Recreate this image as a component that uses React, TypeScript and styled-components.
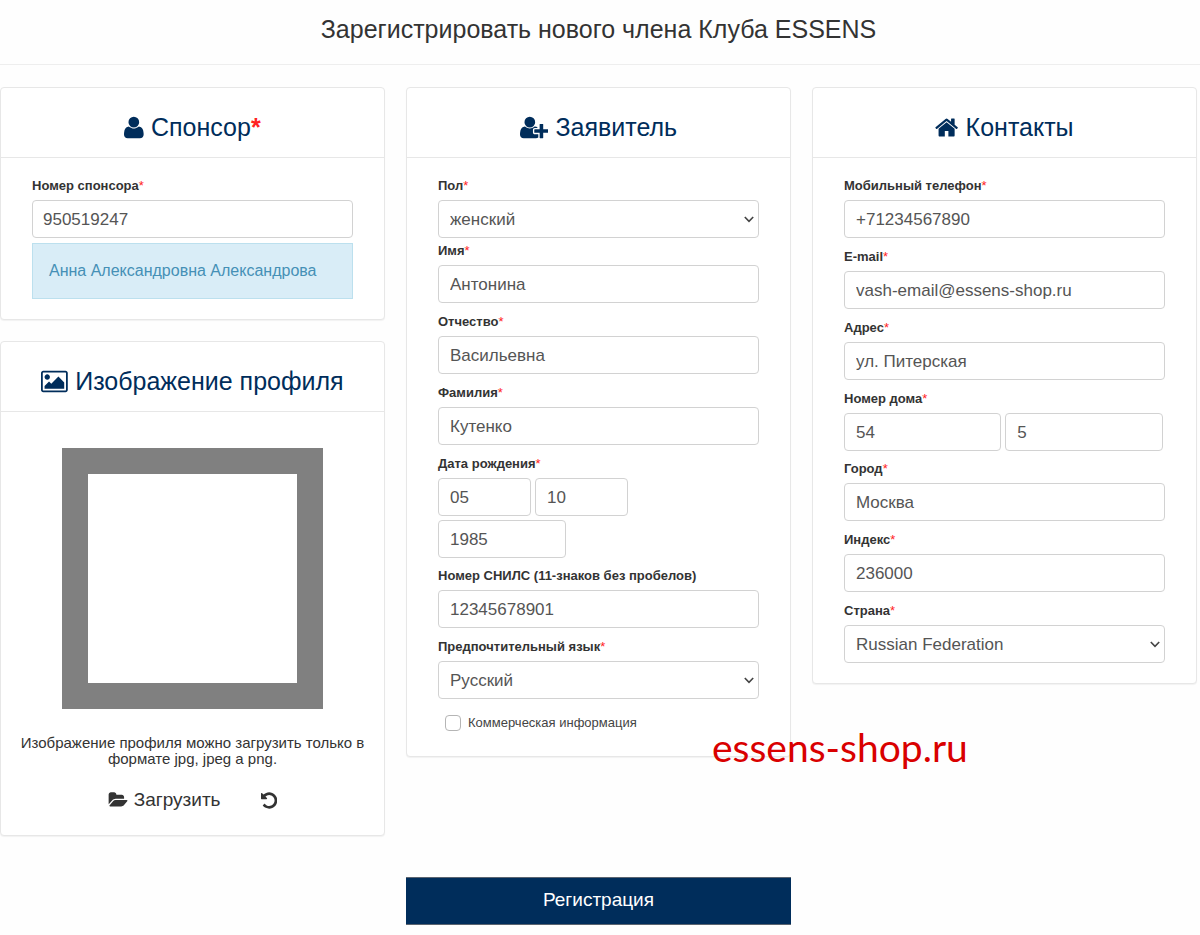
import React, { useId, useState } from "react";
import styled, { createGlobalStyle, css } from "styled-components";

const navy = "#002d5b";
const line = "#e7e7e7";

const GlobalStyle = createGlobalStyle`
  *, *::before, *::after { box-sizing: border-box; }
  body {
    margin: 0;
    background: #fefefe;
    color: #333;
    font-family: "Liberation Sans", Arial, Helvetica, sans-serif;
    font-size: 15px;
  }
  button, input, select { font: inherit; }
`;

const PageHeader = styled.header`
  padding: 11px 3px 17px 0;
  border-bottom: 1px solid #eee;
  text-align: center;
`;

const PageTitle = styled.h1`
  margin: 0;
  font-size: 25px;
  font-weight: 400;
  line-height: 36px;
`;

const Form = styled.form`
  padding: 22px 3px 10px 0;
`;

const Columns = styled.div`
  display: grid;
  grid-template-columns: repeat(3, minmax(0, 1fr));
  gap: 21px;
  align-items: start;
`;

const Column = styled.div`
  position: relative;
  display: flex;
  flex-direction: column;
  gap: 21px;
`;

const Card = styled.section`
  background: #fff;
  border: 1px solid ${line};
  border-radius: 4px;
  box-shadow: 0 1px 1px rgba(0, 0, 0, 0.05);
`;

const CardHeader = styled.header`
  padding: 21px 16px 12px;
  border-bottom: 1px solid ${line};
`;

const CardTitle = styled.h2`
  display: flex;
  justify-content: center;
  align-items: center;
  gap: 7px;
  margin: 0;
  color: ${navy};
  font-size: 25px;
  font-weight: 400;
  line-height: 36px;
`;

const CardBody = styled.div`
  padding: 19px 31px 20px;
`;

const PhotoBody = styled.div`
  display: flex;
  flex-direction: column;
  align-items: center;
  padding: 36px 16px 22px;
`;

const Star = styled.span<{ $weight?: number }>`
  color: #f22;
  font-weight: ${(p) => p.$weight ?? 400};
`;

const Icon = styled.svg`
  flex: none;
  fill: currentColor;
`;

const FieldBox = styled.div<{ $gap: number }>`
  margin-bottom: ${(p) => p.$gap}px;
`;

const Label = styled.label`
  display: block;
  margin-bottom: 5px;
  font-size: 13px;
  font-weight: 700;
  line-height: 18px;
`;

const control = css`
  display: block;
  height: 38px;
  border: 1px solid #d2d2d2;
  border-radius: 4px;
  background: #fff;
  color: #555;
  font-size: 17px;
`;

const Input = styled.input<{ $width?: string; $pad?: number }>`
  ${control}
  width: ${(p) => p.$width ?? "100%"};
  padding: 8px ${(p) => p.$pad ?? 11}px 6px;
`;

const SelectWrap = styled.div`
  position: relative;
`;

const Select = styled.select`
  ${control}
  appearance: none;
  width: 100%;
  padding: 7px 24px 6px 11px;
`;

const Chevron = styled.svg`
  position: absolute;
  top: 16px;
  right: 5px;
  fill: none;
  stroke: #444;
  stroke-width: 1.6;
  pointer-events: none;
`;

const InputRow = styled.div`
  display: flex;
  flex-wrap: wrap;
  gap: 4px;
`;

const SponsorName = styled.p`
  margin: 5px 0 0;
  padding: 16px;
  border: 1px solid #bce0ee;
  background: #d9edf7;
  color: #4590b6;
  font-size: 16px;
  line-height: 22px;
`;

const CheckRow = styled.label`
  display: flex;
  align-items: center;
  gap: 7px;
  padding: 5px 7px 4px;
  color: #444;
  font-size: 13px;
  line-height: 18px;
`;

const Checkbox = styled.input`
  appearance: none;
  width: 16px;
  height: 16px;
  margin: 0;
  border: 1px solid #b5b5b5;
  border-radius: 4px;
  background: #fff;

  &:checked {
    background: ${navy};
  }
`;

const Photo = styled.div`
  width: 261px;
  max-width: 100%;
  aspect-ratio: 1;
  border: 26px solid #808080;
  background: #fff;
`;

const PhotoNote = styled.p`
  margin: 26px 0 20px;
  font-size: 15px;
  line-height: 16px;
  text-align: center;
`;

const PhotoActions = styled.div`
  display: flex;
  gap: 40px;
`;

const PlainButton = styled.button`
  display: flex;
  align-items: center;
  gap: 6px;
  padding: 0;
  border: 0;
  background: none;
  color: #333;
  font-size: 19px;
  line-height: 26px;
`;

const SubmitRow = styled.div`
  display: grid;
  grid-template-columns: repeat(3, minmax(0, 1fr));
  gap: 21px;
  margin-top: 41px;
`;

const SubmitButton = styled.button`
  grid-column: 2;
  padding: 9px 10px 11px;
  border: 1px solid #5b6470;
  border-width: 1px 0;
  background: ${navy};
  color: #fff;
  font-size: 19px;
  line-height: 26px;
`;

const SiteMark = styled.span`
  position: absolute;
  top: 634px;
  left: 306px;
  z-index: 1;
  color: #d90000;
  font-family: Lato, sans-serif;
  font-size: 39px;
  line-height: 52px;
  white-space: nowrap;
`;

const glyphs = {
  user: {
    box: "0 0 1408 1792",
    d: "M1408 1405q0 120-73 189.5t-194 69.5h-874q-121 0-194-69.5t-73-189.5q0-53 3.5-103.5t14-109 26.5-108.5 43-97.5 62-81 85.5-53.5 111.5-20q9 0 42 21.5t74.5 48 108 48 133.5 21.5 133.5-21.5 108-48 74.5-48 42-21.5q61 0 111.5 20t85.5 53.5 62 81 43 97.5 26.5 108.5 14 109 3.5 103.5zm-320-893q0 159-112.5 271.5t-271.5 112.5-271.5-112.5-112.5-271.5 112.5-271.5 271.5-112.5 271.5 112.5 112.5 271.5z",
  },
  userPlus: {
    box: "0 0 2048 1792",
    d: "M704 896q-159 0-271.5-112.5t-112.5-271.5 112.5-271.5 271.5-112.5 271.5 112.5 112.5 271.5-112.5 271.5-271.5 112.5zm960 128h352q13 0 22.5 9.5t9.5 22.5v192q0 13-9.5 22.5t-22.5 9.5h-352v352q0 13-9.5 22.5t-22.5 9.5h-192q-13 0-22.5-9.5t-9.5-22.5v-352h-352q-13 0-22.5-9.5t-9.5-22.5v-192q0-13 9.5-22.5t22.5-9.5h352v-352q0-13 9.5-22.5t22.5-9.5h192q13 0 22.5 9.5t9.5 22.5v352zm-736 224q0 52 38 90t90 38h256v238q-68 50-171 50h-874q-121 0-194-69t-73-190q0-53 3.5-103.5t14-109 26.5-108.5 43-97.5 62-81 85.5-53.5 111.5-20q19 0 39 17 79 61 154.5 91.5t164.5 30.5 164.5-30.5 154.5-91.5q20-17 39-17 132 0 217 96h-223q-52 0-90 38t-38 90v192z",
  },
  home: {
    box: "64 0 1664 1792",
    d: "M1472 992v480q0 26-19 45t-45 19h-384v-384h-256v384h-384q-26 0-45-19t-19-45v-480q0-1 .5-3t.5-3l575-474 575 474q1 2 1 6zm223-69l-62 74q-8 9-21 11h-3q-13 0-21-7l-692-577-692 577q-12 8-24 7-13-2-21-11l-62-74q-8-10-7-23.5t11-21.5l719-599q32-26 76-26t76 26l244 204v-195q0-14 9-23t23-9h192q14 0 23 9t9 23v408l219 182q10 8 11 21.5t-7 23.5z",
  },
  picture: {
    box: "64 0 1920 1792",
    d: "M704 576q0 80-56 136t-136 56-136-56-56-136 56-136 136-56 136 56 56 136zm1024 384v448h-1408v-192l320-320 160 160 512-512zm96-704h-1600q-13 0-22.5 9.5t-9.5 22.5v1216q0 13 9.5 22.5t22.5 9.5h1600q13 0 22.5-9.5t9.5-22.5v-1216q0-13-9.5-22.5t-22.5-9.5zm160 32v1216q0 66-47 113t-113 47h-1600q-66 0-113-47t-47-113v-1216q0-66 47-113t113-47h1600q66 0 113 47t47 113z",
  },
  folder: {
    box: "0 0 1943 1792",
    d: "M1943 952q0 31-31 66l-336 396q-43 51-120.5 86.5t-143.5 35.5h-1088q-34 0-60.5-13t-26.5-43q0-31 31-66l336-396q43-51 120.5-86.5t143.5-35.5h1088q34 0 60.5 13t26.5 43zm-343-344v160h-832q-94 0-197 47.5t-164 119.5l-337 396-5 6q0-4-.5-12.5t-.5-12.5v-960q0-92 66-158t158-66h320q92 0 158 66t66 158v32h544q92 0 158 66t66 158z",
  },
  undo: {
    box: "128 0 1536 1792",
    d: "M1664 896q0 156-61 298t-164 245-245 164-298 61q-172 0-327-72.5t-264-204.5q-7-10-6.5-22.5t8.5-20.5l137-138q10-9 25-9 16 2 23 12 73 95 179 147t225 52q104 0 198.5-40.5t163.5-109.5 109.5-163.5 40.5-198.5-40.5-198.5-109.5-163.5-163.5-109.5-198.5-40.5q-98 0-188 35.5t-160 101.5l137 138q31 30 14 69-17 40-59 40h-448q-26 0-45-19t-19-45v-448q0-42 40-59 39-17 69 14l130 129q107-101 244.5-156.5t284.5-55.5q156 0 298 61t245 164 164 245 61 298z",
  },
};

function Glyph({ name, size }: { name: keyof typeof glyphs; size: number }) {
  const { box, d } = glyphs[name];
  return (
    <Icon viewBox={box} height={size} aria-hidden="true">
      <path d={d} />
    </Icon>
  );
}

type FieldProps = {
  label: string;
  value: string;
  required?: boolean;
  type?: string;
  gap?: number;
  pad?: number;
};

function TextField({ label, value, required = true, type = "text", gap = 10, pad }: FieldProps) {
  const id = useId();
  return (
    <FieldBox $gap={gap}>
      <Label htmlFor={id}>
        {label}
        {required && <Star>*</Star>}
      </Label>
      <Input id={id} type={type} defaultValue={value} $pad={pad} />
    </FieldBox>
  );
}

function SelectField({ label, options, gap = 10 }: { label: string; options: string[]; gap?: number }) {
  const id = useId();
  return (
    <FieldBox $gap={gap}>
      <Label htmlFor={id}>
        {label}
        <Star>*</Star>
      </Label>
      <SelectWrap>
        <Select id={id}>
          {options.map((o) => (
            <option key={o}>{o}</option>
          ))}
        </Select>
        <Chevron width="10" height="7" viewBox="0 0 10 7" aria-hidden="true">
          <path d="M.8 1 5 5.4 9.2 1" />
        </Chevron>
      </SelectWrap>
    </FieldBox>
  );
}

type Part = { name: string; value: string; width: string };

function GroupField({ label, parts }: { label: string; parts: Part[] }) {
  const id = useId();
  return (
    <FieldBox $gap={9}>
      <Label htmlFor={id}>
        {label}
        <Star>*</Star>
      </Label>
      <InputRow>
        {parts.map((p, i) => (
          <Input
            key={p.name}
            id={i === 0 ? id : undefined}
            aria-label={i === 0 ? undefined : p.name}
            defaultValue={p.value}
            $width={p.width}
          />
        ))}
      </InputRow>
    </FieldBox>
  );
}

export default function App() {
  const [promo, setPromo] = useState(false);
  return (
    <>
      <GlobalStyle />
      <PageHeader>
        <PageTitle>Зарегистрировать нового члена Клуба ESSENS</PageTitle>
      </PageHeader>
      <Form onSubmit={(e) => e.preventDefault()}>
        <Columns>
          <Column>
            <Card>
              <CardHeader>
                <CardTitle>
                  <Glyph name="user" size={25} />
                  <span>
                    Спонсор<Star $weight={700}>*</Star>
                  </span>
                </CardTitle>
              </CardHeader>
              <CardBody>
                <TextField label="Номер спонсора" value="950519247" gap={0} pad={10} />
                <SponsorName>Анна Александровна Александрова</SponsorName>
              </CardBody>
            </Card>
            <Card>
              <CardHeader>
                <CardTitle>
                  <Glyph name="picture" size={25} />
                  Изображение профиля
                </CardTitle>
              </CardHeader>
              <PhotoBody>
                <Photo />
                <PhotoNote>Изображение профиля можно загрузить только в формате jpg, jpeg а png.</PhotoNote>
                <PhotoActions>
                  <PlainButton type="button">
                    <Glyph name="folder" size={18} />
                    Загрузить
                  </PlainButton>
                  <PlainButton type="button" aria-label="Сбросить">
                    <Glyph name="undo" size={19} />
                  </PlainButton>
                </PhotoActions>
              </PhotoBody>
            </Card>
          </Column>

          <Column>
            <Card>
              <CardHeader>
                <CardTitle>
                  <Glyph name="userPlus" size={25} />
                  Заявитель
                </CardTitle>
              </CardHeader>
              <CardBody>
                <SelectField label="Пол" options={["женский", "мужской"]} gap={4} />
                <TextField label="Имя" value="Антонина" />
                <TextField label="Отчество" value="Васильевна" />
                <TextField label="Фамилия" value="Кутенко" />
                <GroupField
                  label="Дата рождения"
                  parts={[
                    { name: "День", value: "05", width: "29%" },
                    { name: "Месяц", value: "10", width: "29%" },
                    { name: "Год", value: "1985", width: "40%" },
                  ]}
                />
                <TextField label="Номер СНИЛС (11-знаков без пробелов)" value="12345678901" required={false} />
                <SelectField label="Предпочтительный язык" options={["Русский", "English"]} />
                <CheckRow>
                  <Checkbox type="checkbox" checked={promo} onChange={(e) => setPromo(e.target.checked)} />
                  Коммерческая информация
                </CheckRow>
              </CardBody>
            </Card>
            <SiteMark>essens-shop.ru</SiteMark>
          </Column>

          <Column>
            <Card>
              <CardHeader>
                <CardTitle>
                  <Glyph name="home" size={25} />
                  Контакты
                </CardTitle>
              </CardHeader>
              <CardBody>
                <TextField label="Мобильный телефон" value="+71234567890" type="tel" />
                <TextField label="E-mail" value="vash-email@essens-shop.ru" type="email" />
                <TextField label="Адрес" value="ул. Питерская" />
                <GroupField
                  label="Номер дома"
                  parts={[
                    { name: "Дом", value: "54", width: "49%" },
                    { name: "Квартира", value: "5", width: "49%" },
                  ]}
                />
                <TextField label="Город" value="Москва" />
                <TextField label="Индекс" value="236000" />
                <SelectField label="Страна" options={["Russian Federation"]} gap={0} />
              </CardBody>
            </Card>
          </Column>
        </Columns>
        <SubmitRow>
          <SubmitButton type="submit">Регистрация</SubmitButton>
        </SubmitRow>
      </Form>
    </>
  );
}
